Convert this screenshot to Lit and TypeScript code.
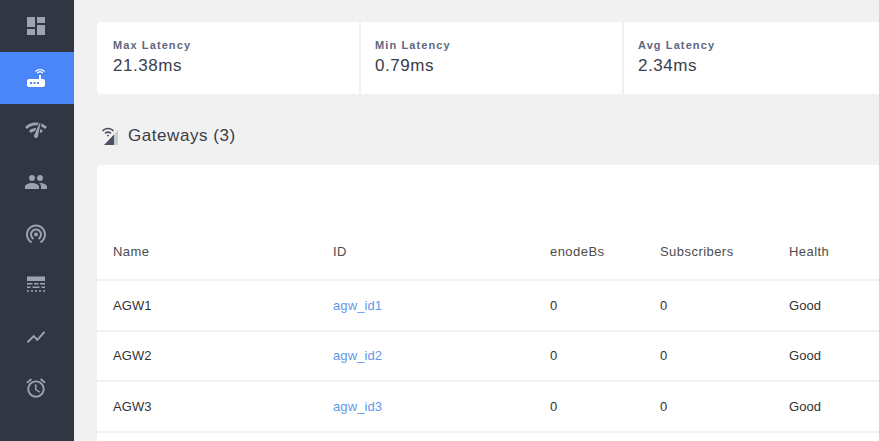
import { LitElement, html, css, svg } from "lit";
import { customElement } from "lit/decorators.js";

const ICONS = [
  { vb: "0 0 24 24", p: svg`<path d="M3 13h8V3H3v10zm0 8h8v-6H3v6zm10 0h8V11h-8v10zm0-18v6h8V3h-8z"/>` },
  { vb: "0 0 24 24", p: svg`<path d="M20.200 5.900l.8-.8C19.600 3.700 17.800 3 16 3s-3.600.7-5 2.100l.8.8C13 4.800 14.500 4.200 16 4.200s3 .6 4.200 1.700zm-.9.8c-.9-.9-2.100-1.400-3.300-1.400s-2.400.5-3.300 1.400l.8.8c.7-.7 1.600-1 2.500-1 .9 0 1.800.3 2.500 1l.8-.8zM19 13h-2V9h-2v4H5c-1.100 0-2 .9-2 2v4c0 1.100.9 2 2 2h14c1.100 0 2-.9 2-2v-4c0-1.100-.9-2-2-2zM8 18H6v-2h2v2zm3.500 0h-2v-2h2v2zm3.500 0h-2v-2h2v2z"/>` },
  { vb: "0 0 24 24", p: svg`<path d="M15.900 5c-.17 0-.32.09-.41.23l-.07.15-5.180 11.650c-.16.29-.26.61-.26.96 0 1.110.9 2.010 2.010 2.010.96 0 1.770-.68 1.960-1.590l.01-.03L16.400 5.500c0-.28-.22-.5-.5-.5zM1 9l2 2c2.880-2.880 6.790-4.070 10.530-3.590l1.200-2.710C9.890 3.860 4.820 5.180 1 9zm20 2l2-2c-1.640-1.640-3.540-2.820-5.570-3.560l-.53 2.820c1.500.62 2.900 1.530 4.100 2.740zm-4 4l2-2c-.8-.8-1.700-1.420-2.660-1.890l-.55 2.920c.42.27.83.59 1.210.97zM5 13l2 2c1.130-1.130 2.560-1.790 4.030-2l1.280-2.880c-2.630-.08-5.300.87-7.310 2.880z"/>` },
  { vb: "0 0 24 24", p: svg`<path d="M16 11c1.700 0 3-1.300 3-3s-1.300-3-3-3-3 1.300-3 3 1.300 3 3 3zm-8 0c1.700 0 3-1.300 3-3S9.700 5 8 5 5 6.300 5 8s1.300 3 3 3zm0 2c-2.300 0-7 1.200-7 3.500V19h14v-2.500C15 14.200 10.300 13 8 13zm8 0c-.3 0-.6 0-1 .1 1.200.8 2 1.900 2 3.400V19h6v-2.500c0-2.300-4.700-3.500-7-3.500z"/>` },
  { vb: "0 0.500 24 24", p: svg`<path d="M12 11c-1.100 0-2 .9-2 2s.9 2 2 2 2-.9 2-2-.9-2-2-2zm6 2c0-3.300-2.700-6-6-6s-6 2.700-6 6c0 2.200 1.200 4.100 3 5.200l1-1.700c-1.200-.7-2-2-2-3.500 0-2.200 1.800-4 4-4s4 1.800 4 4c0 1.500-.8 2.800-2 3.500l1 1.700c1.800-1.100 3-3 3-5.200zM12 3C6.500 3 2 7.500 2 13c0 3.700 2 6.900 5 8.700l1-1.700c-2.400-1.400-4-4-4-7 0-4.400 3.600-8 8-8s8 3.600 8 8c0 3-1.600 5.600-4 7l1 1.700c3-1.800 5-5 5-8.700 0-5.500-4.500-10-10-10z"/>` },
  { vb: "0 1 24 24", p: svg`<path d="M3 3.500h18V8H3zM3 10h5.500v1.500H3zM10 10h4.500v1.500H10zM16 10h5v1.500h-5zM3 13.500h3.500V15H3zM8.500 13.500h7V15h-7zM17.500 13.500H21V15h-3.500zM3 17.200h2v1.600H3zM7 17.200h2v1.600H7zM11 17.200h2v1.600h-2zM15 17.200h2v1.600h-2zM19 17.200h2v1.600h-2z"/>` },
  { vb: "-1 0 26 26", p: svg`<path d="M3.500 18.490l6-6.010 4 4L22 6.920l-1.410-1.410-7.090 7.970-4-4L2 16.990z"/>` },
  { vb: "-0.500 1.500 25 25", p: svg`<path d="M22 5.700l-4.600-3.900-1.300 1.500 4.600 3.900L22 5.700zM7.900 3.400L6.600 1.900 2 5.700l1.300 1.500 4.600-3.800zM12.500 8H11v6l4.700 2.900.8-1.200-4-2.400V8zM12 4c-5 0-9 4-9 9s4 9 9 9 9-4 9-9-4-9-9-9zm0 16c-3.900 0-7-3.100-7-7s3.100-7 7-7 7 3.100 7 7-3.100 7-7 7z"/>` },
];

const ROWS = [
  ["AGW1", "agw_id1"],
  ["AGW2", "agw_id2"],
  ["AGW3", "agw_id3"],
];

const STATS = [
  ["Max Latency", "21.38ms"],
  ["Min Latency", "0.79ms"],
  ["Avg Latency", "2.34ms"],
];

@customElement("app-root")
export class AppRoot extends LitElement {
  static styles = css`
    :host {
      display: block;
      width: 879px;
      height: 441px;
      overflow: hidden;
      background: #f1f1f1;
      font-family: "Liberation Sans", Arial, sans-serif;
    }
    .app {
      display: flex;
      height: 441px;
    }
    .side {
      flex: 0 0 74px;
      background: #323643;
      display: flex;
      flex-direction: column;
    }
    .nav {
      flex: 0 0 52px;
      display: flex;
      align-items: center;
      justify-content: center;
      padding-right: 2px;
      color: #9da3b3;
    }
    .nav.active {
      background: #4a86f7;
      color: #fff;
    }
    .nav svg {
      width: 24px;
      height: 24px;
      fill: currentColor;
    }
    .main {
      flex: none;
      width: 805px;
      padding: 22px 0 0 23px;
      box-sizing: border-box;
    }
    .stats {
      display: grid;
      grid-template-columns: 262px 261px 1fr;
      gap: 2px;
      height: 72px;
      width: 800px;
    }
    .stat {
      background: #fff;
      padding: 17px 14px 0;
      box-sizing: border-box;
    }
    .stat:first-child {
      padding-left: 16px;
      border-radius: 4px 0 0 4px;
    }
    .label {
      font-size: 11px;
      line-height: 13px;
      font-weight: 700;
      letter-spacing: 1.1px;
      color: #606780;
    }
    .value {
      margin-top: 3px;
      font-size: 17px;
      line-height: 22px;
      letter-spacing: 0.55px;
      color: #3a3d4a;
    }
    .title {
      display: flex;
      align-items: center;
      gap: 9px;
      height: 71px;
      margin: 0;
      padding: 13px 0 0 5px;
      box-sizing: border-box;
      font-size: 17px;
      font-weight: 400;
      letter-spacing: 0.55px;
      color: #3a3d4a;
    }
    .title svg {
      width: 17px;
      height: 19px;
      flex: none;
    }
    .card {
      background: #fff;
      width: 800px;
      height: 300px;
      border-radius: 4px 0 0 0;
      padding-top: 64px;
      box-sizing: border-box;
    }
    .row {
      display: grid;
      grid-template-columns: 220px 217px 110px 129px 1fr;
      padding-left: 16px;
      align-items: center;
      height: 50.5px;
      box-sizing: border-box;
      border-bottom: 2px solid #f1f1f1;
      font-size: 13px;
      letter-spacing: 0.1px;
      color: #333;
    }
    .row.head {
      height: 52px;
      color: #4c4c4c;
      padding-bottom: 5px;
      letter-spacing: 0.45px;
    }
    .link {
      color: #5f97ec;
    }
  `;

  render() {
    return html`<div class="app">
      <nav class="side">
        ${ICONS.map(
          (ic, i) => html`<div class="nav ${i === 1 ? "active" : ""}">
            <svg viewBox=${ic.vb}>${ic.p}</svg>
          </div>`
        )}
      </nav>
      <main class="main">
        <section class="stats">
          ${STATS.map(
            ([l, v]) => html`<div class="stat">
              <div class="label">${l}</div>
              <div class="value">${v}</div>
            </div>`
          )}
        </section>
        <h1 class="title">
          <svg viewBox="0 0 17 19">
            <path d="M12 7.500V18H2z" fill="#4b5163" />
            <path d="M12 7.500L16 3v15h-4z" fill="#c9ccd3" />
            <path d="M0 3.500C3-.2 9-.2 12 3.500l-1.200 1C8.300 1.500 3.700 1.500 1.200 4.500zM2.500 6C4.500 3.800 7.500 3.800 9.500 6L8.300 7C7 5.500 5 5.500 3.700 7zM4.800 8.400c.8-.8 1.600-.8 2.400 0L6 9.800z" fill="#4b5163" />
          </svg>
          Gateways (3)
        </h1>
        <section class="card">
          <div class="row head">
            <span>Name</span><span>ID</span><span>enodeBs</span><span>Subscribers</span><span>Health</span>
          </div>
          ${ROWS.map(
            ([n, id]) => html`<div class="row">
              <span>${n}</span><span class="link">${id}</span><span>0</span><span>0</span><span>Good</span>
            </div>`
          )}
        </section>
      </main>
    </div>`;
  }
}
